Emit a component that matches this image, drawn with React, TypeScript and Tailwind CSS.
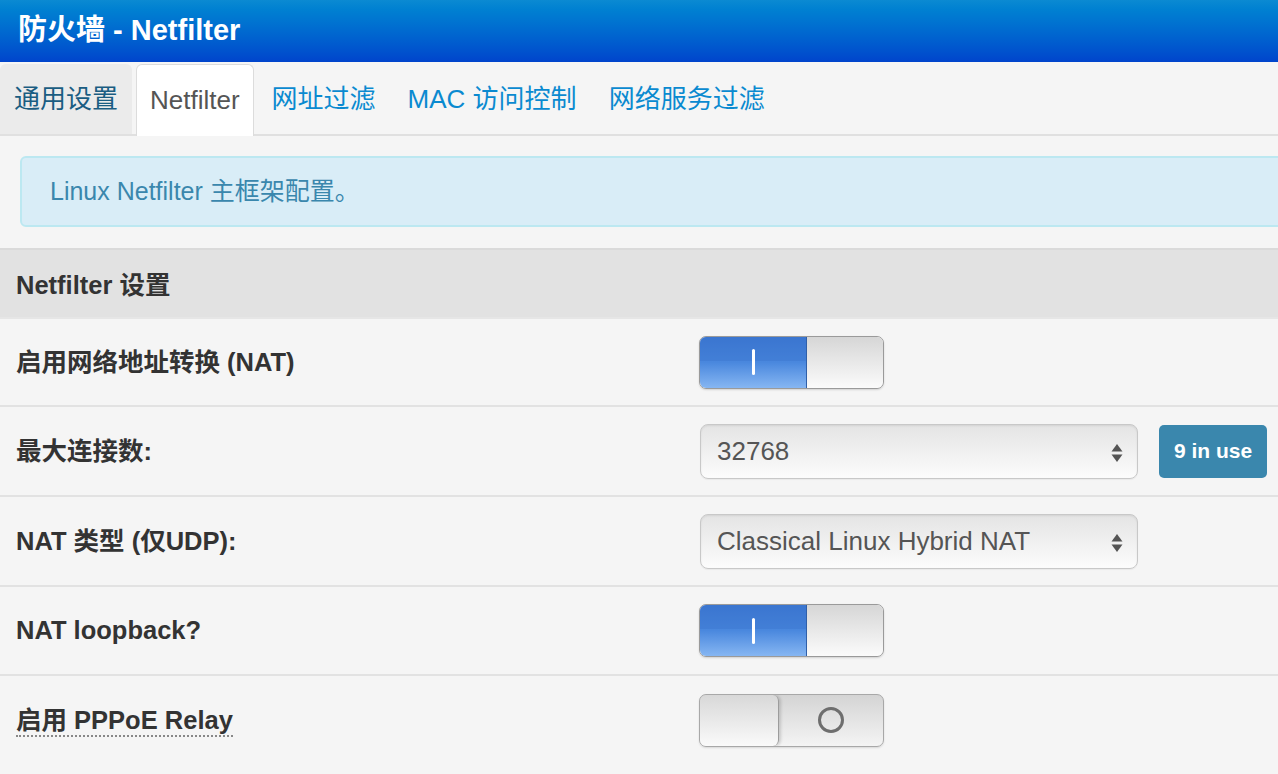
import React from "react";

const FONT = { fontFamily: '"Liberation Sans", "Noto Sans CJK SC", sans-serif' };

function ToggleOn() {
  return (
    <div className="flex h-[53px] w-[185px] overflow-hidden rounded-[7px] border border-[#9a9a9a] shadow-[0_1px_2px_rgba(0,0,0,0.15)]">
      <div className="relative flex w-[107px] items-center justify-center border-r border-[#2f5fa8] bg-linear-to-b from-[#3c78d2] via-[#4a88de] to-[#86b6f2]">
        <div className="absolute inset-x-0 top-0 h-[24px] bg-[#3a74cc]/40" />
        <div className="relative h-[26px] w-[3px] rounded-sm bg-white" />
      </div>
      <div className="flex-1 rounded-r-[6px] bg-linear-to-b from-[#d6d6d6] to-[#fbfbfb]" />
    </div>
  );
}

function ToggleOff() {
  return (
    <div className="flex h-[53px] w-[185px] overflow-hidden rounded-[7px] border border-[#a8a8a8] bg-linear-to-b from-[#d4d4d4] to-[#f4f4f4] shadow-[0_1px_2px_rgba(0,0,0,0.12)]">
      <div className="w-[79px] rounded-[6px] border-r border-[#9c9c9c] bg-linear-to-b from-[#d8d8d8] to-[#fafafa] shadow-[2px_0_3px_rgba(0,0,0,0.15)]" />
      <div className="flex flex-1 items-center justify-center">
        <div className="h-[26px] w-[26px] rounded-full border-[3px] border-[#6e6e6e]" />
      </div>
    </div>
  );
}

function Select({ value }: { value: string }) {
  return (
    <div className="relative flex h-[55px] w-[438px] items-center rounded-[8px] border border-[#c8c8c8] bg-linear-to-b from-[#e4e4e4] to-[#fcfcfc] pl-[16px] text-[26px] text-[#555] shadow-[inset_0_1px_2px_rgba(0,0,0,0.08),0_1px_1px_rgba(0,0,0,0.05)]">
      <span>{value}</span>
      <svg className="absolute right-[14px] top-[18px]" width="12" height="20" viewBox="0 0 12 20">
        <polygon points="6,1 11.5,8.5 0.5,8.5" fill="#555" />
        <polygon points="6,19 11.5,11.5 0.5,11.5" fill="#555" />
      </svg>
    </div>
  );
}

function Row({ label, h, children, dotted, last }: { label: string; h: string; children: React.ReactNode; dotted?: boolean; last?: boolean }) {
  return (
    <div className={`flex items-center ${last ? "" : "border-b-2 border-[#e2e2e2]"} ${h}`}>
      <div className="w-[699px] pl-[16px] text-[25.5px] font-bold text-[#333]">
        {dotted ? (
          <span className="border-b-2 border-dotted border-[#888] pb-[1px]">{label}</span>
        ) : (
          label
        )}
      </div>
      <div className="flex items-center">{children}</div>
    </div>
  );
}

export default function App() {
  return (
    <div className="h-[774px] w-[1278px] overflow-hidden bg-[#f5f5f5]" style={FONT}>
      <div className="flex h-[62px] items-center bg-linear-to-b from-[#0b8ad2] to-[#0044cc] pl-[18px] text-[29px] font-bold text-white">
        防火墙 - Netfilter
      </div>
      <div className="flex h-[74px] items-end gap-[4px] border-b-2 border-[#e0e0e0] bg-[#f5f5f5] pt-[3px] text-[26px]">
        <div className="flex h-[70px] items-center rounded-t-[6px] bg-[#ebebeb] px-[14px] text-[#1a5d82]">通用设置</div>
        <div className="-mb-[2px] flex h-[72px] items-center rounded-t-[6px] border border-b-0 border-[#dcdcdc] bg-white px-[13px] text-[#555]">
          Netfilter
        </div>
        <div className="flex h-[70px] items-center px-[14px] text-[#0a8ad0]">网址过滤</div>
        <div className="flex h-[70px] items-center px-[14px] text-[#0a8ad0]">MAC 访问控制</div>
        <div className="flex h-[70px] items-center px-[14px] text-[#0a8ad0]">网络服务过滤</div>
      </div>
      <div className="pt-[20px]">
        <div className="ml-[20px] mr-[-20px] flex h-[71px] items-center rounded-[6px] border-2 border-[#bce8f1] bg-[#d9edf7] pl-[28px] text-[25px] text-[#3a87ad]">
          Linux Netfilter 主框架配置。
        </div>
      </div>
      <div className="mt-[21px] flex h-[71px] items-center border-t-2 border-b-2 border-t-[#dadada] border-b-[#e6e6e6] bg-[#e2e2e2] pl-[16px] pt-[4px] text-[25.5px] font-bold text-[#333]">
        Netfilter 设置
      </div>
      <Row label="启用网络地址转换 (NAT)" h="h-[88px]">
        <ToggleOn />
      </Row>
      <Row label="最大连接数:" h="h-[90px]">
        <div className="ml-[1px]">
          <Select value="32768" />
        </div>
        <div className="ml-[21px] flex h-[53px] w-[108px] items-center justify-center rounded-[5px] bg-[#3a87ad] text-[21px] font-bold text-white">
          9 in use
        </div>
      </Row>
      <Row label="NAT 类型 (仅UDP):" h="h-[90px]">
        <div className="ml-[1px]">
          <Select value="Classical Linux Hybrid NAT" />
        </div>
      </Row>
      <Row label="NAT loopback?" h="h-[89px]">
        <ToggleOn />
      </Row>
      <Row label="启用 PPPoE Relay" h="h-[88px]" dotted last>
        <ToggleOff />
      </Row>
    </div>
  );
}
